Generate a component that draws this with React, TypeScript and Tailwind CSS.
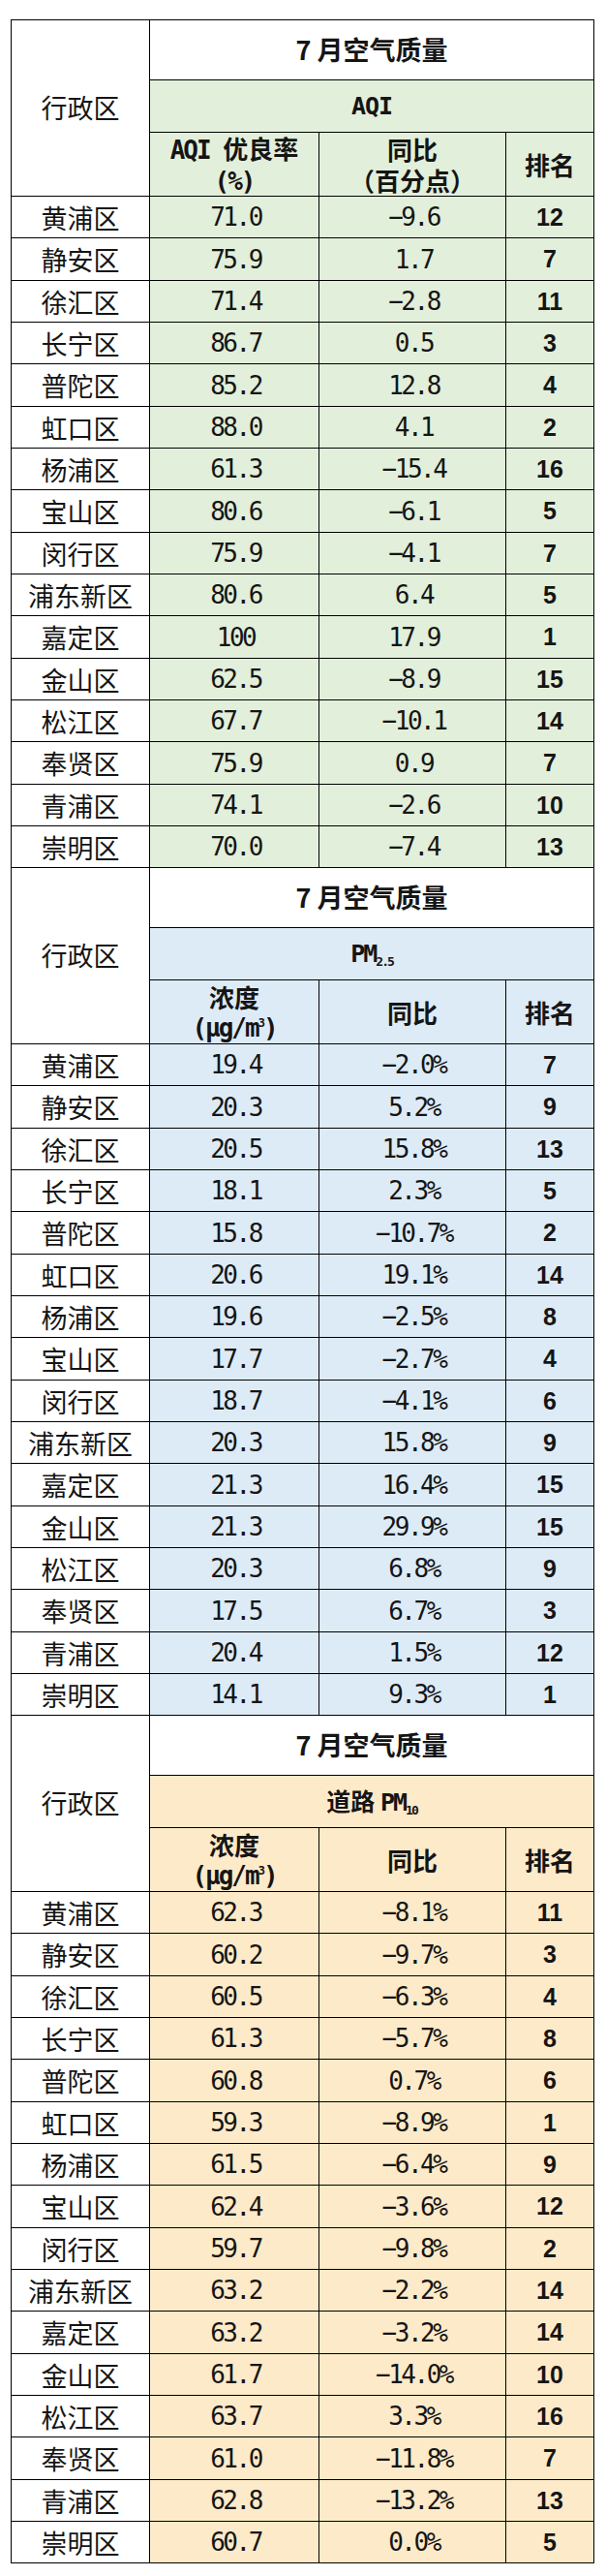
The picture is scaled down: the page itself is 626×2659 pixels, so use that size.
const cjk = "font-['Noto_Sans_CJK_SC',sans-serif]";
const mono = "font-['DejaVu_Sans_Mono','Noto_Sans_CJK_SC',monospace]";

type Row = [string, string, string, string];

const aqiRows: Row[] = [
  ["黄浦区", "71.0", "−9.6", "12"],
  ["静安区", "75.9", "1.7", "7"],
  ["徐汇区", "71.4", "−2.8", "11"],
  ["长宁区", "86.7", "0.5", "3"],
  ["普陀区", "85.2", "12.8", "4"],
  ["虹口区", "88.0", "4.1", "2"],
  ["杨浦区", "61.3", "−15.4", "16"],
  ["宝山区", "80.6", "−6.1", "5"],
  ["闵行区", "75.9", "−4.1", "7"],
  ["浦东新区", "80.6", "6.4", "5"],
  ["嘉定区", "100", "17.9", "1"],
  ["金山区", "62.5", "−8.9", "15"],
  ["松江区", "67.7", "−10.1", "14"],
  ["奉贤区", "75.9", "0.9", "7"],
  ["青浦区", "74.1", "−2.6", "10"],
  ["崇明区", "70.0", "−7.4", "13"],
];

const pm25Rows: Row[] = [
  ["黄浦区", "19.4", "−2.0%", "7"],
  ["静安区", "20.3", "5.2%", "9"],
  ["徐汇区", "20.5", "15.8%", "13"],
  ["长宁区", "18.1", "2.3%", "5"],
  ["普陀区", "15.8", "−10.7%", "2"],
  ["虹口区", "20.6", "19.1%", "14"],
  ["杨浦区", "19.6", "−2.5%", "8"],
  ["宝山区", "17.7", "−2.7%", "4"],
  ["闵行区", "18.7", "−4.1%", "6"],
  ["浦东新区", "20.3", "15.8%", "9"],
  ["嘉定区", "21.3", "16.4%", "15"],
  ["金山区", "21.3", "29.9%", "15"],
  ["松江区", "20.3", "6.8%", "9"],
  ["奉贤区", "17.5", "6.7%", "3"],
  ["青浦区", "20.4", "1.5%", "12"],
  ["崇明区", "14.1", "9.3%", "1"],
];

const pm10Rows: Row[] = [
  ["黄浦区", "62.3", "−8.1%", "11"],
  ["静安区", "60.2", "−9.7%", "3"],
  ["徐汇区", "60.5", "−6.3%", "4"],
  ["长宁区", "61.3", "−5.7%", "8"],
  ["普陀区", "60.8", "0.7%", "6"],
  ["虹口区", "59.3", "−8.9%", "1"],
  ["杨浦区", "61.5", "−6.4%", "9"],
  ["宝山区", "62.4", "−3.6%", "12"],
  ["闵行区", "59.7", "−9.8%", "2"],
  ["浦东新区", "63.2", "−2.2%", "14"],
  ["嘉定区", "63.2", "−3.2%", "14"],
  ["金山区", "61.7", "−14.0%", "10"],
  ["松江区", "63.7", "3.3%", "16"],
  ["奉贤区", "61.0", "−11.8%", "7"],
  ["青浦区", "62.8", "−13.2%", "13"],
  ["崇明区", "60.7", "0.0%", "5"],
];

// each cell is centred content on its own background; 1px grid gaps show the black lines
const cell = "flex flex-col items-center justify-center text-center";

const Unit = () => (
  <>
    <div className={cjk}>浓度</div>
    <div className={`${mono} tracking-[-2px]`}>
      (µg/m<sup className="text-[12px] -top-[10px]">3</sup>)
    </div>
  </>
);

type SectionProps = {
  bg: string;
  metric: React.ReactNode;
  valueHead: React.ReactNode;
  changeHead: React.ReactNode;
  rows: Row[];
};

const Section = ({ bg, metric, valueHead, changeHead, rows }: SectionProps) => (
  <div className="grid grid-cols-[142px_174px_192px_90px] grid-rows-[61px_53px_65px_42px_43px_42px_42px_43px_42px_42px_43px_42px_42px_43px_42px_42px_43px_42px_42px] gap-px">
    <div className={`${cell} row-span-3 bg-white ${cjk} text-[27px] font-normal`}>行政区</div>
    <div className={`${cell} col-span-3 bg-white ${cjk} text-[27px] font-bold`}>7 月空气质量</div>
    <div className={`${cell} col-span-3 ${bg} text-[25px] font-bold`}>
      <div>{metric}</div>
    </div>
    <div className={`${cell} ${bg} text-[26px] font-bold leading-[32px]`}>{valueHead}</div>
    <div className={`${cell} ${bg} ${cjk} text-[26px] font-bold leading-[32px]`}>{changeHead}</div>
    <div className={`${cell} ${bg} ${cjk} text-[26px] font-bold`}>排名</div>
    {rows.map(([name, value, change, rank]) => (
      <div key={name} className="contents">
        <div className={`${cell} bg-white ${cjk} text-[27px] font-normal leading-none`}>{name}</div>
        <div className={`${cell} ${bg} ${mono} text-[26px] tracking-[-2.5px] leading-none pl-[3px]`}>{value}</div>
        <div className={`${cell} ${bg} ${mono} text-[26px] tracking-[-2.5px] leading-none pl-[3px]`}>{change}</div>
        <div className={`${cell} ${bg} font-['Liberation_Sans',sans-serif] text-[25px] font-bold leading-none`}>
          {rank}
        </div>
      </div>
    ))}
  </div>
);

export default function App() {
  return (
    <div className="bg-white w-[626px] h-[2659px] pt-[20px] pl-[11px] text-[#151515]">
      <div className="flex flex-col gap-px bg-black p-px w-[603px]">
        <Section
          bg="bg-[#e2efda]"
          metric={<span className={`${mono} tracking-[-1px]`}>AQI</span>}
          valueHead={
            <>
              <div>
                <span className={`${mono} tracking-[-2px]`}>AQI </span>
                <span className={cjk}>优良率</span>
              </div>
              <div className={`${mono} tracking-[-2px]`}>(%)</div>
            </>
          }
          changeHead={
            <>
              <div>同比</div>
              <div>（百分点）</div>
            </>
          }
          rows={aqiRows}
        />
        <Section
          bg="bg-[#ddebf7]"
          metric={
            <span className={`${mono} tracking-[-2px]`}>
              PM<sub className="text-[13px] -bottom-[4px]">2.5</sub>
            </span>
          }
          valueHead={<Unit />}
          changeHead="同比"
          rows={pm25Rows}
        />
        <Section
          bg="bg-[#fdeac8]"
          metric={
            <>
              <span className={cjk}>道路 </span>
              <span className={`${mono} tracking-[-2px]`}>
                PM<sub className="text-[13px] -bottom-[4px]">10</sub>
              </span>
            </>
          }
          valueHead={<Unit />}
          changeHead="同比"
          rows={pm10Rows}
        />
      </div>
    </div>
  );
}
